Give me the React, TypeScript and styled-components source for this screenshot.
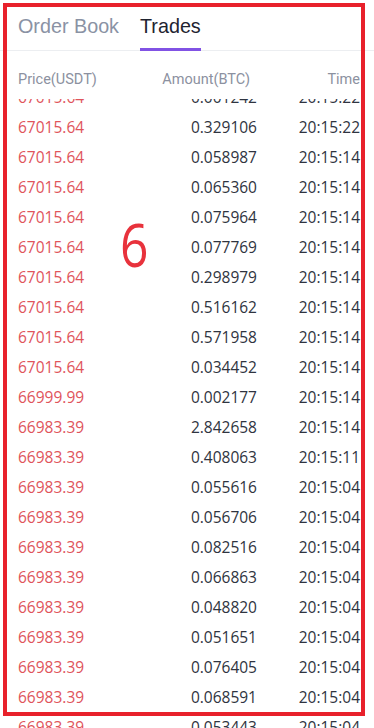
import React from 'react';
import styled, { createGlobalStyle } from 'styled-components';

const GlobalStyle = createGlobalStyle`
  html, body {
    margin: 0;
    padding: 0;
    background: #ffffff;
  }
  body {
    font-family: Roboto, "Noto Sans", "Liberation Sans", sans-serif;
  }
`;

const Page = styled.div`
  position: relative;
  width: 374px;
  height: 728px;
  overflow: hidden;
  background: #fff;
`;

const TabBar = styled.div`
  display: flex;
  align-items: stretch;
  gap: 21px;
  height: 50px;
  padding-left: 18px;
  border-bottom: 1px solid #eceef1;
  box-sizing: content-box;
`;

const Tab = styled.div<{ $active?: boolean }>`
  position: relative;
  display: flex;
  align-items: center;
  padding-top: 2px;
  font-family: "Liberation Sans", Arial, sans-serif;
  font-size: 19.75px;
  color: ${(p) => (p.$active ? '#1e2330' : '#8a92a4')};

  &::after {
    content: '';
    display: ${(p) => (p.$active ? 'block' : 'none')};
    position: absolute;
    left: 0;
    right: 0;
    bottom: -1px;
    height: 3px;
    background: #8152e4;
  }
`;

const HeaderRow = styled.div`
  display: grid;
  grid-template-columns: 1fr 100px 103px;
  align-items: center;
  height: 48px;
  padding: 10px 14px 0 18px;
  box-sizing: border-box;
  font-size: 14.5px;
  line-height: 1.1;
  color: #8c91a0;
  position: relative;
  z-index: 1;
  background: #fff;
`;

const HeadCell = styled.div<{ $align?: 'left' | 'right'; $inset?: number }>`
  text-align: ${(p) => p.$align ?? 'left'};
  padding-right: ${(p) => p.$inset ?? 0}px;
  white-space: nowrap;
`;

const Viewport = styled.div`
  height: 630px;
  overflow: hidden;
`;

const List = styled.div`
  margin-top: -16px;
`;

const Row = styled.div`
  display: grid;
  grid-template-columns: 1fr 100px 103px;
  align-items: center;
  height: 30px;
  padding: 0 14px 0 18px;
  font-family: "Open Sans", "Noto Sans", sans-serif;
  font-size: 15.5px;
  line-height: 1.15;
  color: #2f3440;
`;

const Price = styled.div`
  color: #e0545b;
`;

const NumCell = styled.div`
  text-align: right;
  white-space: nowrap;
`;

const Frame = styled.div`
  position: absolute;
  left: 3px;
  top: 3px;
  width: 362px;
  height: 713px;
  border: 4px solid #e8212b;
  box-sizing: border-box;
  pointer-events: none;
  z-index: 5;
`;

const Label = styled.div`
  position: absolute;
  left: 120px;
  top: 214px;
  font-family: "Open Sans", "Noto Sans", sans-serif;
  font-size: 60px;
  line-height: 1;
  color: #e8323c;
  transform: scaleX(0.83);
  transform-origin: left top;
  z-index: 6;
`;

type Trade = { price: string; amount: string; time: string };

const trades: Trade[] = [
  { price: '67015.64', amount: '0.001242', time: '20:15:22' },
  { price: '67015.64', amount: '0.329106', time: '20:15:22' },
  { price: '67015.64', amount: '0.058987', time: '20:15:14' },
  { price: '67015.64', amount: '0.065360', time: '20:15:14' },
  { price: '67015.64', amount: '0.075964', time: '20:15:14' },
  { price: '67015.64', amount: '0.077769', time: '20:15:14' },
  { price: '67015.64', amount: '0.298979', time: '20:15:14' },
  { price: '67015.64', amount: '0.516162', time: '20:15:14' },
  { price: '67015.64', amount: '0.571958', time: '20:15:14' },
  { price: '67015.64', amount: '0.034452', time: '20:15:14' },
  { price: '66999.99', amount: '0.002177', time: '20:15:14' },
  { price: '66983.39', amount: '2.842658', time: '20:15:14' },
  { price: '66983.39', amount: '0.408063', time: '20:15:11' },
  { price: '66983.39', amount: '0.055616', time: '20:15:04' },
  { price: '66983.39', amount: '0.056706', time: '20:15:04' },
  { price: '66983.39', amount: '0.082516', time: '20:15:04' },
  { price: '66983.39', amount: '0.066863', time: '20:15:04' },
  { price: '66983.39', amount: '0.048820', time: '20:15:04' },
  { price: '66983.39', amount: '0.051651', time: '20:15:04' },
  { price: '66983.39', amount: '0.076405', time: '20:15:04' },
  { price: '66983.39', amount: '0.068591', time: '20:15:04' },
  { price: '66983.39', amount: '0.053443', time: '20:15:04' },
  { price: '66983.39', amount: '0.041120', time: '20:15:04' },
];

const App: React.FC = () => (
  <>
    <GlobalStyle />
    <Page>
      <TabBar>
        <Tab>Order Book</Tab>
        <Tab $active>Trades</Tab>
      </TabBar>
      <HeaderRow>
        <HeadCell>Price(USDT)</HeadCell>
        <HeadCell $align="right" $inset={7}>
          Amount(BTC)
        </HeadCell>
        <HeadCell $align="right">Time</HeadCell>
      </HeaderRow>
      <Viewport>
        <List>
          {trades.map((t, i) => (
            <Row key={i}>
              <Price>{t.price}</Price>
              <NumCell>{t.amount}</NumCell>
              <NumCell>{t.time}</NumCell>
            </Row>
          ))}
        </List>
      </Viewport>
      <Frame />
      <Label>6</Label>
    </Page>
  </>
);

export default App;
